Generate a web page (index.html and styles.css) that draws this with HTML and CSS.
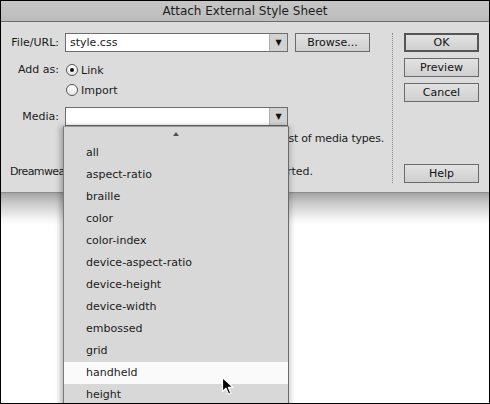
FILE: index.html
```html
<!DOCTYPE html>
<html>
<head>
<meta charset="utf-8">
<link rel="stylesheet" href="styles.css">
</head>
<body>
<div class="frame">
  <div class="titlebar">Attach External Style Sheet</div>
  <div class="dialog">
    <div class="form">
      <div class="row row-file">
        <div class="label">File/URL:</div>
        <div class="combo">
          <div class="combo-text">style.css</div>
          <div class="combo-arrow">▼</div>
        </div>
        <div class="btn btn-browse">Browse...</div>
      </div>
      <div class="row row-add">
        <div class="label label-add">Add as:</div>
        <div class="radios">
          <div class="radio-line"><span class="radio checked"></span>Link</div>
          <div class="radio-line"><span class="radio"></span>Import</div>
        </div>
      </div>
      <div class="row row-media">
        <div class="label">Media:</div>
        <div class="combo">
          <div class="combo-text"></div>
          <div class="combo-arrow">▼</div>
        </div>
      </div>
      <div class="hint hint-1">Or enter a comma-separated list of media types.</div>
      <div class="hint hint-2"><span class="dw">Dreamweaver's</span><span>sample sheets are supported.</span></div>
    </div>
    <div class="sep"></div>
    <div class="buttons">
      <div class="btn btn-default">OK</div>
      <div class="btn">Preview</div>
      <div class="btn">Cancel</div>
      <div class="btn btn-help">Help</div>
    </div>
  </div>
  <div class="under-shadow"></div>

  <div class="menu">
    <div class="menu-up"><span class="up-tri"></span></div>
    <div class="item">all</div>
    <div class="item">aspect-ratio</div>
    <div class="item">braille</div>
    <div class="item">color</div>
    <div class="item">color-index</div>
    <div class="item">device-aspect-ratio</div>
    <div class="item">device-height</div>
    <div class="item">device-width</div>
    <div class="item">embossed</div>
    <div class="item">grid</div>
    <div class="item item-hover">handheld</div>
    <div class="item">height</div>
  </div>

  <svg class="cursor" width="14" height="20" viewBox="0 0 14 20">
    <path d="M1.5 1.5 L1.5 15.5 L5 12.2 L7.6 18.2 L9.8 17.2 L7.3 11.3 L12 11.3 Z" fill="#000" stroke="#fff" stroke-width="1.2" stroke-linejoin="round"/>
  </svg>
</div>
</body>
</html>
```

FILE: styles.css
```css
html, body {
  margin: 0;
  padding: 0;
  background: #fff;
}

body {
  font-family: "DejaVu Sans", Verdana, sans-serif;
  font-size: 11px;
  color: #1b1b1b;
}

.frame {
  position: relative;
  width: 490px;
  height: 404px;
  box-sizing: border-box;
  border: 1px solid #000;
  background: #fff;
  overflow: hidden;
}

.titlebar {
  height: 20px;
  line-height: 20px;
  border-bottom: 1px solid #6c6c6c;
  background: linear-gradient(#c6c6c6, #bcbcbc);
  text-align: center;
  font-size: 12px;
  color: #1e1e1e;
}

.dialog {
  display: flex;
  height: 170px;
  background: #dcdcdc;
  border-bottom: 1px solid #8c8c8c;
}

.form {
  width: 391px;
  padding-top: 11px;
  display: flex;
  flex-direction: column;
}

.row {
  display: flex;
}

.label {
  width: 58px;
  margin-right: 6px;
  text-align: right;
  line-height: 19px;
}

.combo {
  display: flex;
  width: 223px;
  height: 19px;
  box-sizing: border-box;
  border: 1px solid #6e6e6e;
  background: #fff;
}

.combo-text {
  flex: 1;
  line-height: 17px;
  padding-left: 4px;
}

.combo-arrow {
  width: 17px;
  border-left: 1px solid #b0b0b0;
  background: #d2d2d2;
  font-size: 8px;
  line-height: 17px;
  text-align: center;
  color: #111;
}

.btn-browse {
  margin-left: 7px;
  width: 73px;
  height: 18px;
}

.row-add {
  margin-top: 9px;
}

.label-add {
  line-height: 18px;
}

.radios {
  display: flex;
  flex-direction: column;
  gap: 2px;
}

.radio-line {
  display: flex;
  align-items: center;
  height: 18px;
}

.radio {
  position: relative;
  width: 12px;
  height: 12px;
  box-sizing: border-box;
  border: 1px solid #555;
  border-radius: 50%;
  background: linear-gradient(#fff, #e8e8e8);
  margin-left: 1px;
  margin-right: 3px;
}

.radio.checked::after {
  content: "";
  position: absolute;
  left: 3px;
  top: 3px;
  width: 4px;
  height: 4px;
  border-radius: 50%;
  background: #111;
}

.row-media {
  margin-top: 8px;
}

.row-media .label {
  line-height: 19px;
}

.hint {
  line-height: 14px;
  white-space: nowrap;
}

.hint-1 {
  margin-top: 6px;
  padding-right: 8px;
  text-align: right;
  letter-spacing: -0.2px;
}

.hint-2 {
  margin-top: 19px;
  margin-left: 9px;
  width: 303px;
  display: flex;
  justify-content: space-between;
}

.dw {
  letter-spacing: -0.6px;
}

.sep {
  width: 0;
  margin-top: 11px;
  height: 150px;
  border-left: 1px dotted #8a8a8a;
}

.buttons {
  display: flex;
  flex-direction: column;
  gap: 6px;
  margin-left: 11px;
  padding-top: 11px;
  padding-bottom: 9px;
}

.btn {
  width: 75px;
  height: 19px;
  box-sizing: border-box;
  border: 1px solid #6a6a6a;
  background: linear-gradient(#e2e2e2, #cfcfcf);
  text-align: center;
  line-height: 17px;
  color: #111;
}

.btn-default {
  border: 2px solid #555;
  line-height: 15px;
}

.btn-help {
  margin-top: auto;
}

.under-shadow {
  height: 32px;
  background: linear-gradient(#a4a4a4, #c8c8c8 30%, #f4f4f4 80%, #fff);
}

.menu {
  position: absolute;
  left: 62px;
  top: 125px;
  width: 226px;
  height: 300px;
  box-sizing: border-box;
  background: #d8d8d8;
  border-left: 1px solid #7a7a7a;
  border-right: 1px solid #6a6a6a;
  border-top: 1px solid #9a9a9a;
  box-shadow: -3px 0 5px rgba(0, 0, 0, 0.25), 3px 0 4px rgba(0, 0, 0, 0.12);
}

.menu-up {
  height: 15px;
  display: flex;
  justify-content: center;
  align-items: center;
}

.up-tri {
  width: 0;
  height: 0;
  border-left: 3px solid transparent;
  border-right: 3px solid transparent;
  border-bottom: 4px solid #555;
  margin-top: -2px;
}

.item {
  height: 22px;
  line-height: 22px;
  padding-left: 22px;
}

.item-hover {
  background: #fafafa;
}

.cursor {
  position: absolute;
  left: 220px;
  top: 375px;
}
```
